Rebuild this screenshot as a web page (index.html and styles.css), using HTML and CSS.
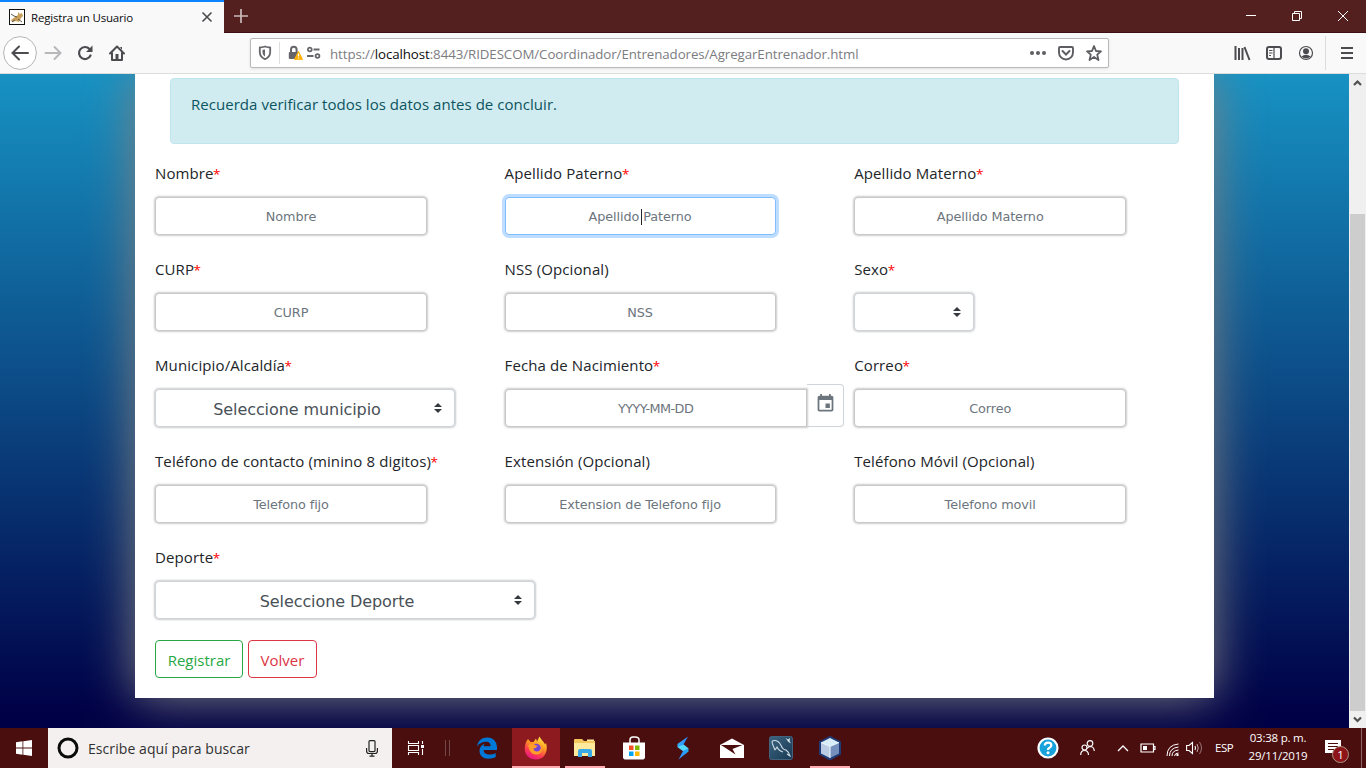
FILE: index.html
```html
<!DOCTYPE html>
<html lang="es">
<head>
<meta charset="utf-8">
<title>Registra un Usuario</title>
<link rel="stylesheet" href="styles.css">
</head>
<body>
<div class="desktop">
  <header class="tabbar">
    <div class="tab">
      <svg class="favicon" width="16" height="16" viewBox="0 0 16 16"><rect x=".5" y=".5" width="15" height="15" fill="#fff" stroke="#111"/><path d="M2 11 6 8 9 6 9 3 11 5 13 4 14 7 12 9 10 13 7 12 3 13Z" fill="#c9a05a"/><path d="M2 5 5 7 8 8M3 13 6 11M9 10 13 13" stroke="#5f594a" fill="none"/></svg>
      <span class="tab-title">Registra un Usuario</span>
      <svg width="12" height="12" viewBox="0 0 12 12"><path d="M1.500 1.500 10.500 10.500M10.500 1.500 1.500 10.500" stroke="#4a4a4f" stroke-width="1.600"/></svg>
    </div>
    <svg class="newtab" width="16" height="16" viewBox="0 0 16 16"><path d="M8 1V15M1 8H15" stroke="#cbbcbc" stroke-width="1.700"/></svg>
    <div class="winctl">
      <svg width="46" height="32"><path d="M18 15.500H28" stroke="#fff"/></svg>
      <svg width="46" height="32"><path d="M18.500 13.500H25.500V20.500H18.500ZM20.500 13V11.500H27.500V18.500H26" stroke="#fff" fill="none"/></svg>
      <svg width="46" height="32"><path d="M18 11 28 21M28 11 18 21" stroke="#fff"/></svg>
    </div>
  </header>
  <nav class="toolbar">
    <div class="nav-btns">
      <svg width="34" height="34" viewBox="0 0 34 34"><circle cx="17" cy="17" r="16.400" fill="#fff" stroke="#b5b5b5"/><path d="M25 17H10M16 10.500 9.500 17 16 23.500" stroke="#4c4c50" stroke-width="2" fill="none" stroke-linecap="round"/></svg>
      <svg width="32" height="32" viewBox="0 0 32 32"><path d="M8.500 16H23M17.500 10 23.500 16 17.500 22" stroke="#b8b8ba" stroke-width="2" fill="none" stroke-linecap="round"/></svg>
      <svg width="32" height="32" viewBox="0 0 32 32"><path d="M21.500 18.500A6 6 0 1 1 20.500 12" stroke="#4c4c50" stroke-width="2.200" fill="none" stroke-linecap="round"/><path d="M23.500 8.500V15H17Z" fill="#4c4c50"/></svg>
      <svg width="32" height="32" viewBox="0 0 32 32"><path d="M9 16.500 16 9.500 23 16.500M11 16V23H21V16" stroke="#4c4c50" stroke-width="2" fill="none" stroke-linecap="round" stroke-linejoin="round"/><path d="M14.500 17H17.500V22H14.500Z" fill="#4c4c50"/><path d="M19 10H21V13Z" fill="#4c4c50"/></svg>
    </div>
    <div class="urlbar">
      <svg class="shield" width="14" height="16" viewBox="0 0 14 16"><path d="M7 1.500C9 2.200 10.500 2.500 12.200 2.500V7C12.200 10.500 10 12.800 7 14.200 4 12.800 1.800 10.500 1.800 7V2.500C3.500 2.500 5 2.200 7 1.500Z" fill="none" stroke="#66666a" stroke-width="1.800" stroke-linejoin="round"/><path d="M7 4.500V11.500C5.500 10.500 4.500 9 4.500 7V4.800Z" fill="#66666a"/></svg>
      <i class="url-sep"></i>
      <svg class="lock" width="16" height="16" viewBox="0 0 16 16"><path d="M3 8V4.500A2.800 2.800 0 0 1 8.600 4.500V8" stroke="#66666a" stroke-width="2" fill="none"/><rect x=".8" y="7" width="10" height="7" rx="1" fill="#66666a"/><path d="M10.500 6.500 14.500 14.300H6.500Z" fill="#ffb000" stroke="#ffb000" stroke-linejoin="round"/><path d="M10.500 8.500V11.500M10.500 12.500V13.500" stroke="#fff" stroke-width="1.300"/></svg>
      <svg class="perm" width="16" height="14" viewBox="0 0 16 14"><circle cx="3.800" cy="3.500" r="1.900" fill="none" stroke="#66666a" stroke-width="1.800"/><path d="M7.500 3.500H13.500M1 10H7.500" stroke="#66666a" stroke-width="2.200"/><circle cx="11.500" cy="10" r="1.900" fill="none" stroke="#66666a" stroke-width="1.800"/></svg>
      <span class="url">https://<b>localhost</b>:8443/RIDESCOM/Coordinador/Entrenadores/AgregarEntrenador.html</span>
      <span class="url-actions">
        <svg width="28" height="16"><g fill="#5e5e62"><circle cx="8" cy="8" r="2"/><circle cx="14" cy="8" r="2"/><circle cx="20" cy="8" r="2"/></g></svg>
        <svg width="28" height="18" viewBox="0 0 28 18"><path d="M8 3H20Q21 3 21 4V8.500A7 7 0 0 1 7 8.500V4Q7 3 8 3Z" fill="none" stroke="#5e5e62" stroke-width="1.900"/><path d="M10.500 7 14 10.500 17.500 7" fill="none" stroke="#5e5e62" stroke-width="2" stroke-linecap="round"/></svg>
        <svg width="28" height="18" viewBox="0 0 28 18"><path d="M14 2 16 7 21 7.300 17.200 10.600 18.500 16 14 13 9.500 16 10.800 10.600 7 7.300 12 7Z" fill="none" stroke="#5e5e62" stroke-width="1.800" stroke-linejoin="round"/></svg>
      </span>
    </div>
    <div class="tools">
      <svg width="32" height="16" viewBox="0 0 32 16"><path d="M9.500 1V15M13 3V15M16.500 3V15M18.500 2 23.500 15" stroke="#4c4c50" stroke-width="2"/></svg>
      <svg width="32" height="16" viewBox="0 0 32 16"><rect x="9" y="2" width="14" height="12" rx="2" fill="none" stroke="#4c4c50" stroke-width="2"/><path d="M16 2V14M11 5.500H14.500M11 8H14.500M11 10.500H13" stroke="#4c4c50" stroke-width="1.200"/></svg>
      <svg width="32" height="16" viewBox="0 0 32 16"><circle cx="16" cy="8" r="6.500" fill="none" stroke="#4c4c50" stroke-width="1.200"/><circle cx="16" cy="6.300" r="3" fill="#4c4c50"/><path d="M11.300 11.500Q16 8 20.700 11.500 16 15.500 11.300 11.500Z" fill="#4c4c50"/></svg>
      <i class="tool-sep"></i>
      <svg class="menu" width="14" height="14"><path d="M1 2H13M1 7H13M1 12H13" stroke="#4c4c50" stroke-width="2"/></svg>
    </div>
  </nav>

  <div class="viewport">
    <main class="page">
      <section class="card">
        <div class="alert">Recuerda verificar todos los datos antes de concluir.</div>
        <form class="fields">
          <div class="field"><label>Nombre<em>*</em></label><div class="input">Nombre</div></div>
          <div class="field"><label>Apellido Paterno<em>*</em></label><div class="input center-col focus">Apellido Paterno<i class="caret"></i></div></div>
          <div class="field"><label>Apellido Materno<em>*</em></label><div class="input">Apellido Materno</div></div>
          <div class="field"><label>CURP<em>*</em></label><div class="input">CURP</div></div>
          <div class="field"><label>NSS (Opcional)</label><div class="input center-col">NSS</div></div>
          <div class="field"><label>Sexo<em>*</em></label><div class="input select short"><svg class="arrows" width="8" height="10" viewBox="0 0 4 5"><path d="M2 0 0 2h4zM2 5 0 3h4z" fill="#343a40"/></svg></div></div>
          <div class="field"><label>Municipio/Alcaldía<em>*</em></label><div class="input select mid"><span>Seleccione municipio</span><svg class="arrows" width="8" height="10" viewBox="0 0 4 5"><path d="M2 0 0 2h4zM2 5 0 3h4z" fill="#343a40"/></svg></div></div>
          <div class="field"><label>Fecha de Nacimiento<em>*</em></label><div class="date"><div class="input date-input">YYYY-MM-DD</div><div class="cal"><svg width="24" height="24" viewBox="0 0 24 24"><path d="M17 12h-5v5h5v-5zM16 1v2H8V1H6v2H5c-1.110 0-1.990.9-1.990 2L3 19c0 1.100.89 2 2 2h14c1.100 0 2-.9 2-2V5c0-1.100-.9-2-2-2h-1V1h-2zm3 18H5V8h14v11z" fill="#6c757d"/></svg></div></div></div>
          <div class="field"><label>Correo<em>*</em></label><div class="input">Correo</div></div>
          <div class="field"><label>Teléfono de contacto (minino 8 digitos)<em>*</em></label><div class="input">Telefono fijo</div></div>
          <div class="field"><label>Extensión (Opcional)</label><div class="input center-col">Extension de Telefono fijo</div></div>
          <div class="field"><label>Teléfono Móvil (Opcional)</label><div class="input">Telefono movil</div></div>
          <div class="field"><label>Deporte<em>*</em></label><div class="input select wide"><span>Seleccione Deporte</span><svg class="arrows" width="8" height="10" viewBox="0 0 4 5"><path d="M2 0 0 2h4zM2 5 0 3h4z" fill="#343a40"/></svg></div></div>
        </form>
        <div class="buttons"><span class="btn ok">Registrar</span><span class="btn back">Volver</span></div>
      </section>
    </main>
    <aside class="scroll">
      <svg width="17" height="17"><path d="M5 11 8.500 7.500 12 11" stroke="#505050" stroke-width="2.200" fill="none"/></svg>
      <i class="thumb"></i>
      <svg width="17" height="17"><path d="M5 6.500 8.500 10 12 6.500" stroke="#505050" stroke-width="2.200" fill="none"/></svg>
    </aside>
  </div>

  <footer class="taskbar">
    <div class="start"><svg width="16" height="16" viewBox="0 0 16 16"><path d="M0 2.200 6.500 1.300V7.500H0ZM7.300 1.200 16 0V7.500H7.300ZM0 8.400H6.500V14.700L0 13.800ZM7.300 8.400H16V16L7.300 14.800Z" fill="#fff"/></svg></div>
    <div class="search">
      <svg width="22" height="22"><circle cx="11" cy="11" r="9" fill="none" stroke="#0b0b0b" stroke-width="3"/></svg>
      <span class="search-text">Escribe aquí para buscar</span>
      <svg width="12" height="17" viewBox="0 0 12 17"><rect x="3" y=".6" width="6" height="11" rx="1" fill="none" stroke="#222" stroke-width="1.200"/><path d="M.6 8V11Q.6 13.500 3 13.500H9Q11.400 13.500 11.400 11V8M6 13.500V16M3.500 16.200H8.500" fill="none" stroke="#222" stroke-width="1.200"/></svg>
    </div>
    <div class="slot view"><svg width="18" height="16" viewBox="0 0 18 16"><path d="M1.500 1V3.500H11.500V1M1.500 15V12.500H11.500V15M1.500 5.500H11.500V10.500H1.500ZM15.500 1V4M15.500 9V15" stroke="#fff" fill="none" stroke-width="1.100"/><rect x="14" y="5" width="3" height="3" fill="#fff"/></svg></div>
    <div class="grip"></div>
    <div class="apps">
      <div class="slot"><svg width="20" height="22" viewBox="0 0 20 22"><path d="M0 9.500C1 3.500 5 .5 10.300.5 16.500.5 20 5 20 10.500V13H6.600C6.800 16.500 9.500 17.600 12.500 17.600 15 17.600 17 17 18.700 15.900V20.100C16.500 21.200 14 21.700 11.500 21.700 6 21.700 2.500 18.500 2.500 13.700 2.500 10.500 4.500 8.100 7.800 6.500 7 7.300 6.700 8.300 6.600 9.300H13.600C13.600 6 11.800 4.800 9 4.800 5.500 4.800 2.300 6.300 0 9.500Z" fill="#0078d7"/></svg></div>
      <div class="slot active"><svg width="24" height="24" viewBox="0 0 24 24"><defs><linearGradient id="fx" x1=".8" y1="0" x2=".3" y2="1"><stop offset="0" stop-color="#fff04a"/><stop offset=".4" stop-color="#ff9a22"/><stop offset=".7" stop-color="#ff3e4e"/><stop offset="1" stop-color="#e31587"/></linearGradient></defs><path d="M2 6 4 3 6.500 6 9.500 6 12 2.500 13 5.500 15.500.5C17 4 20 5.500 21 8.500L22 7C24.500 14 21 23.500 12 23.500 4 23.500.5 17.500.8 12 .9 9.500 1.500 8 2 6Z" fill="url(#fx)"/><circle cx="12.200" cy="12.300" r="4.600" fill="#7544d6"/><path d="M4 9.500Q8 5.800 11.500 9.300 13 10 14 9.500 12.500 12 9.500 12.500 10 16 14 15.500 17.500 14 17 9.500 20 14 15.500 18 9 20 6 15Z" fill="#ff9d29"/></svg></div>
      <div class="slot running"><svg width="22" height="20" viewBox="0 0 22 20"><path d="M0 2Q0 1 1 1H8L10 3H21V18H0Z" fill="#f4c75c"/><path d="M0 5H21V18H0Z" fill="#ffe99d"/><path d="M4 19V13Q4 11 6 11H16Q18 11 18 13V19H14V15H8V19Z" fill="#3aa9e8"/><path d="M13 1.500H20V3H13Z" fill="#ffe99d"/></svg></div>
      <div class="slot"><svg width="24" height="24" viewBox="0 0 24 24"><path d="M8 7V4Q8 1 11 1H13Q17 1 17 4V7" fill="none" stroke="#fff" stroke-width="1.500"/><path d="M1 6.500H23V22L21.500 23.500H2.500L1 22Z" fill="#fff"/><path d="M7 9.500H11.500V14H7Z" fill="#f25022"/><path d="M13 9.500H17.500V14H13Z" fill="#7fba00"/><path d="M7 15.500H11.500V20H7Z" fill="#00a4ef"/><path d="M13 15.500H17.500V20H13Z" fill="#ffb900"/></svg></div>
      <div class="slot"><svg width="14" height="24" viewBox="0 0 14 24"><defs><linearGradient id="bolt" x2="1" y2="1"><stop stop-color="#38d2ff"/><stop offset=".5" stop-color="#2c86ff"/><stop offset="1" stop-color="#25c9e8"/></linearGradient></defs><path d="M12 .5 1.500 8V11L7 15 2.500 23.500 12.500 15.500V12.500L7.500 8.500Z" fill="url(#bolt)"/><path d="M1.500 11 7.500 8.500 12.500 12.500 7 15Z" fill="#55d8f5"/></svg></div>
      <div class="slot"><svg width="24" height="20" viewBox="0 0 24 20"><path d="M0 7 12 .5 24 7V20H0Z" fill="#fff"/><path d="M1 7H22.500L12.500 11 15.500 16.500Z" fill="#4a0e0f"/></svg></div>
      <div class="slot"><svg width="24" height="24" viewBox="0 0 24 24"><defs><linearGradient id="my" x2="1" y2="1"><stop stop-color="#3c6480"/><stop offset="1" stop-color="#183955"/></linearGradient></defs><rect x=".5" y=".5" width="23" height="23" rx="2" fill="url(#my)" stroke="#41637b"/><path d="M6 14 3.500 8Q2 4 6 4.500 10 5 12 9.500T17 14Q20 16 21 20L18 18M6 14 8 11Q10 15 14 16" fill="none" stroke="#cddce4" stroke-width="1.100"/><path d="M16.500 2 19 3.500 21 2 20.500 5 22 7.500 19.500 6Z" fill="#e2ebef"/></svg></div>
      <div class="slot running"><svg width="24" height="24" viewBox="0 0 24 24"><path d="M12 1 22 6V18L12 23.500 2 18V6Z" fill="#283f73" stroke="#203a75" stroke-width="2"/><path d="M12 2 21 6.500 12 10.500 3 6.500Z" fill="#d8edf7"/><path d="M3 6.500 12 10.500V22L3 17.500Z" fill="#bacbe3"/><path d="M21 6.500 12 10.500V22L21 17.500Z" fill="#7690bd"/><path d="M12 10.500V22M3 6.500 12 10.500 21 6.500" stroke="#f1faff" fill="none"/></svg></div>
    </div>
    <div class="tray">
      <svg width="22" height="22"><circle cx="11" cy="11" r="9.500" fill="#17a2dc" stroke="#fff" stroke-width="2.200"/><path d="M7.800 8.500Q8 5.700 11 5.700 14.300 5.700 14.300 8.300 14.300 10 12.500 10.800 11 11.500 11 13" fill="none" stroke="#fff" stroke-width="2.300"/><circle cx="11" cy="15.800" r="1.500" fill="#fff"/></svg>
      <svg class="people" width="15" height="16" viewBox="0 0 15 16"><g fill="none" stroke="#fff" stroke-width="1.200"><circle cx="4.500" cy="7.500" r="2.500"/><path d="M.7 15Q.7 10.500 4.500 10.500T8.500 15"/><circle cx="10" cy="3.500" r="2.800"/><path d="M7 8.500Q8.500 6.500 10.500 6.500 14 6.700 14.300 11"/></g></svg>
      <svg class="chev" width="12" height="8"><path d="M1 7 6 2 11 7" fill="none" stroke="#fff" stroke-width="1.300"/></svg>
      <svg class="batt" width="16" height="10"><path d="M1 1H13.500V9H1ZM14 3.500H15V6.500H14" fill="none" stroke="#fff" stroke-width="1.200"/><rect x="3" y="3" width="4" height="4" fill="#fff"/></svg>
      <svg class="wifi" width="13" height="13" viewBox="0 0 13 13"><g fill="none" stroke="#fff"><path d="M1 13Q1 2 12.500 1"/><path d="M3.500 13Q3.500 5 12.500 4"/><path d="M6 13Q6 7.500 12.500 7"/><path d="M8.500 13Q9 10 12.500 10"/></g><circle cx="11.500" cy="12" r="1.200" fill="#fff"/></svg>
      <svg class="vol" width="17" height="14" viewBox="0 0 17 14"><path d="M.6 4.500H3L6.500 1.500V12.500L3 9.500H.6ZM9 5Q10 7 9 9" fill="none" stroke="#fff" stroke-width="1.100"/><path d="M11 3Q13.500 7 11 11" fill="none" stroke="#c6aaaa"/><path d="M13.500 1Q17.500 7 13.500 13" fill="none" stroke="#987575"/></svg>
      <span class="lang">ESP</span>
      <div class="clock"><span>03:38 p. m.</span><span class="day">29/11/2019</span></div>
      <div class="notif"><svg width="16" height="17"><path d="M0 0H16V13H12V16L9 13H0Z" fill="#fff"/><path d="M3 3.500H13M3 6.500H13M3 9.500H10" stroke="#4a0e0f"/></svg><span class="badge">1</span></div>
    </div>
    <i class="peek"></i>
  </footer>
</div>
</body>
</html>
```
FILE: styles.css
```css
* { box-sizing: border-box; }
body { margin: 0; overflow: hidden; font-family: "Open Sans", "Noto Sans", sans-serif; }
svg { display: block; flex: none; }
.desktop { width: 1366px; height: 768px; display: flex; flex-direction: column; overflow: hidden; }

/* tab strip */
.tabbar { height: 33px; flex: none; display: flex; background: #531f1f; border-bottom: 1px solid #3d1113; }
.tab { width: 224px; height: 33px; background: #f9f9fa; border-top: 2px solid #0a84ff; display: flex; align-items: center; padding: 0 11px 1px 9px; }
.tab-title { flex: 1; margin-left: 6px; font-size: 11.5px; letter-spacing: -.17px; color: #0c0c0d; white-space: nowrap; }
.newtab { margin: 8px 0 0 9px; }
.winctl { margin-left: auto; display: flex; }

/* navigation bar */
.toolbar { height: 41px; flex: none; display: flex; align-items: center; background: #f9f9fa; border-bottom: 1px solid #dcdcdd; padding-left: 3px; }
.nav-btns { display: flex; align-items: center; width: 247px; }
.urlbar { width: 859px; height: 30px; background: #fff; border: 1px solid #b9b9ba; border-radius: 2px; box-shadow: 0 1px 3px rgba(0,0,0,.1); display: flex; align-items: center; }
.shield { margin-left: 7px; }
.url-sep { width: 1px; height: 22px; background: #dededf; margin: 0 8px 0 7px; }
.perm { margin-left: 2px; }
.url { margin: 2px 0 0 8px; font-size: 13.3px; letter-spacing: -.08px; color: #7c7c7f; white-space: nowrap; }
.url b { font-weight: 400; color: #0c0c0d; }
.url-actions { display: flex; align-items: center; margin-left: auto; }
.tools { margin-left: 117px; display: flex; align-items: center; }
.tool-sep { width: 1px; height: 34px; background: #dcdcdd; margin-left: 3px; }
.menu { margin-left: 14px; }

/* page */
.viewport { flex: 1; min-height: 0; display: flex; background: #fff; }
.page { width: 1349px; padding-left: 135px; overflow: hidden; background: linear-gradient(#1792c3, #000046 98%); }
.card { width: 1079px; height: 624px; padding: 4px 0 0 20px; background: #fff; box-shadow: 0 0 46px gray; }
.alert { width: 1009px; height: 66px; margin-left: 15px; padding: 12px 20px; background: #d1ecf1; border: 1px solid #bee5eb; border-radius: 4px; color: #0c5460; font-size: 15px; letter-spacing: .04px; line-height: 26px; }
.fields { margin: 17px 0 0; display: grid; grid-template-columns: repeat(3, 349.6px); row-gap: 23px; }
.field { height: 73px; }
label { display: block; height: 24px; margin-bottom: 12px; font-size: 15px; letter-spacing: .11px; line-height: 24px; color: #212529; white-space: nowrap; }
label em { margin-left: -.5px; font-style: normal; color: red; font-size: 13.5px; line-height: 1; letter-spacing: 0; }
.input { position: relative; width: 272px; height: 38px; display: flex; align-items: center; justify-content: center; background: #fff; border: 1px solid #c6c8ca; border-radius: 4px; box-shadow: 0 0 2px 1px #ccc; color: #6c757d; font-family: "DejaVu Sans", sans-serif; font-size: 12.8px; letter-spacing: -.08px; white-space: nowrap; }
.center-col { width: 271px; }
.focus { border-color: #80bdff; box-shadow: 0 0 0 3px #bfdeff; }
.caret { position: absolute; left: 135px; top: 11px; width: 1px; height: 16px; background: #212529; }
.select { color: #495057; font-size: 16px; border-color: #ced4da; padding: 2px 16px 0 0; }
.short { width: 120px; }
.mid { width: 300px; }
.wide { width: 380px; }
.arrows { position: absolute; right: 12px; top: 13px; }
.date { display: flex; align-items: flex-end; height: 43px; margin-top: -5px; }
.date-input { width: 302px; border-radius: 4px 0 0 4px; flex: none; letter-spacing: -.55px; }
.cal { width: 37px; height: 43px; border: 1px solid #ced4da; border-left: 0; border-radius: 0 4px 4px 0; display: flex; justify-content: center; padding: 8px 0 0 2px; }
.cal svg { width: 21px; height: 21px; }
.buttons { display: flex; gap: 5px; margin-top: 22px; }
.btn { height: 38px; display: flex; align-items: center; justify-content: center; border: 1px solid; border-radius: 4px; padding-top: 1px; font-size: 15px; }
.ok { width: 88px; color: #28a745; }
.back { width: 69px; color: #dc3545; }
.scroll { width: 17px; background: #f0f0f0; display: flex; flex-direction: column; align-items: center; }
.thumb { width: 15px; height: 497px; margin-top: 123px; background: #cdcdcd; }

/* taskbar */
.taskbar { height: 40px; flex: none; display: flex; background: #4a0e0f; color: #fff; }
.start { width: 48px; display: flex; align-items: center; justify-content: center; }
.search { width: 344px; background: #f4f0f0; display: flex; align-items: center; padding: 0 14px 0 9px; }
.search-text { flex: 1; margin-left: 9px; font-size: 14px; letter-spacing: .07px; color: #303030; }
.slot { width: 48px; display: flex; align-items: center; justify-content: center; }
.grip { width: 5px; height: 16px; margin: 12px 13px 0 5px; border: solid #74474a; border-width: 0 1px; }
.apps { display: flex; gap: 1px; }
.active { background: linear-gradient(#8d1a1e 38px, #ffabb0 38px); }
.running { background: linear-gradient(#ffabb0, #ffabb0) center bottom / 40px 2px no-repeat; }
.tray { margin-left: auto; display: flex; align-items: center; }
.people { margin-left: 21px; }
.chev { margin-left: 22px; }
.batt { margin-left: 11px; }
.wifi { margin: 2px 0 0 10px; }
.vol { margin-left: 7px; }
.lang { margin: -2px 0 0 12px; width: 20px; font-size: 11.5px; letter-spacing: -.5px; }
.clock { width: 60px; margin: -2px 0 0 13px; display: flex; flex-direction: column; align-items: center; font-size: 11.5px; line-height: 18px; letter-spacing: -.22px; white-space: nowrap; }
.notif { position: relative; width: 36px; margin-left: 17px; }
.badge { position: absolute; left: 7px; top: 6px; width: 17px; height: 17px; border-radius: 50%; background: #8d1418; border: 1px solid #a98; font-size: 11.5px; line-height: 15px; text-align: center; }
.peek { width: 5px; border-left: 1px solid #8c6667; }
```
